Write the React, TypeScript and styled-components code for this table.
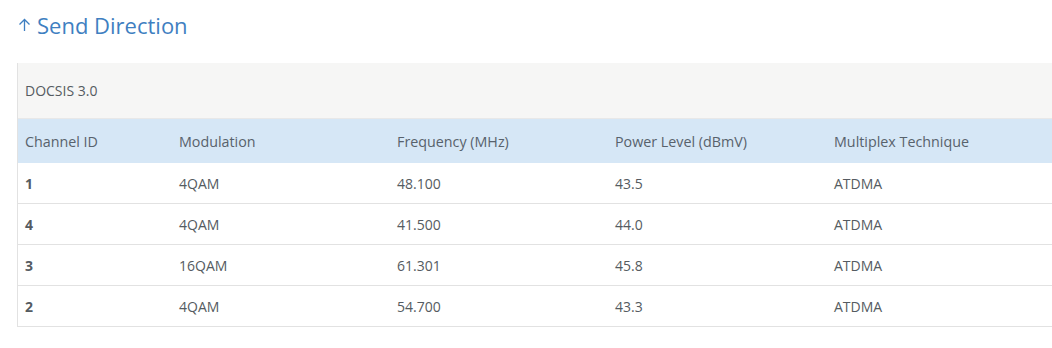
import React from 'react'
import styled, { createGlobalStyle } from 'styled-components'

const GlobalStyle = createGlobalStyle`
  body {
    margin: 0;
    background: #ffffff;
    font-family: 'Open Sans', 'Liberation Sans', sans-serif;
    overflow: hidden;
  }
`

const Page = styled.main`
  padding: 10px 0 0 17px;
`

const Title = styled.h2`
  margin: 0 0 23px 1px;
  display: flex;
  align-items: center;
  gap: 6px;
  font-size: 22px;
  font-weight: 400;
  color: #3f7fc1;
  height: 30px;
`

const Table = styled.div`
  border-left: 1px solid #e2e2e2;
`

const Caption = styled.div`
  height: 55px;
  display: flex;
  align-items: center;
  padding-left: 7px;
  background: #f6f6f5;
  border-bottom: 1px solid #e8e8e8;
  color: #555b61;
  font-size: 14px;
`

const Row = styled.div<{ $head?: boolean }>`
  display: grid;
  grid-template-columns: 154px 218px 218px 219px 1fr;
  height: ${({ $head }) => ($head ? '44px' : '40px')};
  align-items: center;
  background: ${({ $head }) => ($head ? '#d6e7f6' : '#ffffff')};
  border-bottom: ${({ $head }) => ($head ? 'none' : '1px solid #e2e2e2')};
  color: ${({ $head }) => ($head ? '#58626c' : '#555b61')};
  font-size: ${({ $head }) => ($head ? '14.3px' : '14px')};
`

const Cell = styled.div<{ $bold?: boolean }>`
  padding-left: 7px;
  white-space: nowrap;
  font-weight: ${({ $bold }) => ($bold ? 700 : 400)};
`

const ArrowUp = () => (
  <svg width="13" height="14" viewBox="0 0 13 14" fill="none" stroke="#3f7fc1" strokeWidth="1.3">
    <path d="M6.5 13V1.5M1.5 6.5l5-5 5 5" />
  </svg>
)

const channels = [
  { id: '1', mod: '4QAM', freq: '48.100', power: '43.5', tech: 'ATDMA' },
  { id: '4', mod: '4QAM', freq: '41.500', power: '44.0', tech: 'ATDMA' },
  { id: '3', mod: '16QAM', freq: '61.301', power: '45.8', tech: 'ATDMA' },
  { id: '2', mod: '4QAM', freq: '54.700', power: '43.3', tech: 'ATDMA' },
]

const App: React.FC = () => {
  return (
    <>
      <GlobalStyle />
      <Page>
        <Title>
          <ArrowUp />
          Send Direction
        </Title>
        <Table>
          <Caption>DOCSIS 3.0</Caption>
          <Row $head>
            <Cell>Channel ID</Cell>
            <Cell>Modulation</Cell>
            <Cell>Frequency (MHz)</Cell>
            <Cell>Power Level (dBmV)</Cell>
            <Cell>Multiplex Technique</Cell>
          </Row>
          {channels.map((c) => (
            <Row key={c.id}>
              <Cell $bold>{c.id}</Cell>
              <Cell>{c.mod}</Cell>
              <Cell>{c.freq}</Cell>
              <Cell>{c.power}</Cell>
              <Cell>{c.tech}</Cell>
            </Row>
          ))}
        </Table>
      </Page>
    </>
  )
}
export default App
